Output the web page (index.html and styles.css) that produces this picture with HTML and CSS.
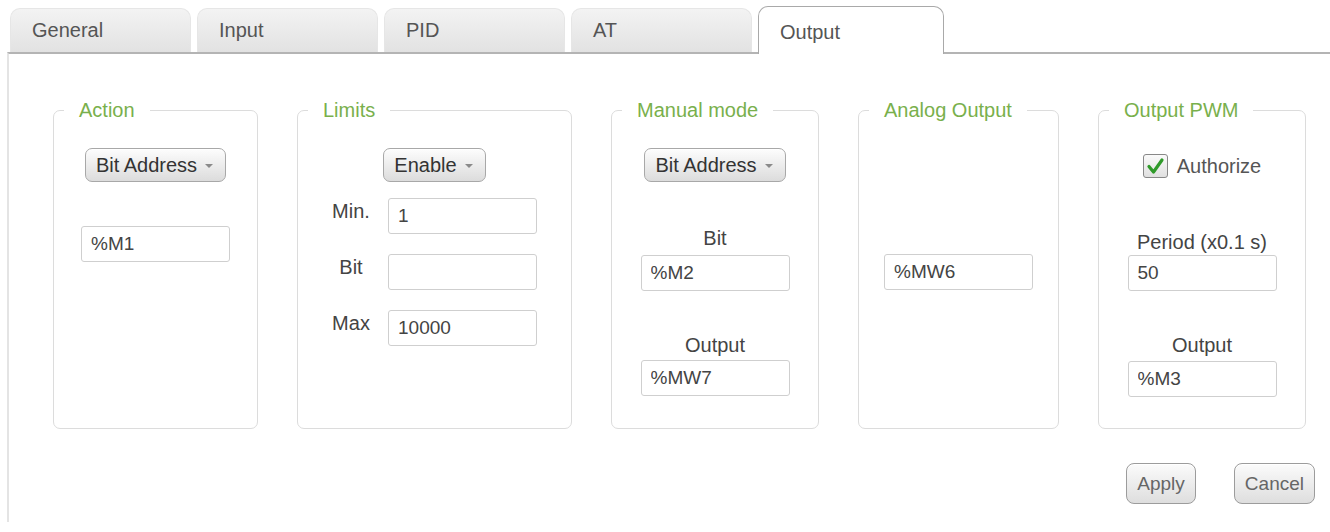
FILE: index.html
```html
<!DOCTYPE html>
<html>
<head>
<meta charset="utf-8">
<link rel="stylesheet" href="styles.css">
</head>
<body>
<div class="tabs">
  <div class="tab">General</div>
  <div class="tab">Input</div>
  <div class="tab">PID</div>
  <div class="tab">AT</div>
  <div class="tab active">Output</div>
</div>
<div class="panel">
  <div class="groups">
    <fieldset class="group w-action">
      <legend>Action</legend>
      <div class="body">
        <div class="select"><span>Bit Address</span><span class="caret"></span></div>
        <input class="field action-field" type="text" value="%M1" readonly>
      </div>
    </fieldset>
    <fieldset class="group w-limits">
      <legend>Limits</legend>
      <div class="body">
        <div class="select"><span>Enable</span><span class="caret"></span></div>
        <div class="limits-grid">
          <span class="row-label">Min.</span><input class="field" type="text" value="1" readonly>
          <span class="row-label">Bit</span><input class="field" type="text" value="" readonly>
          <span class="row-label">Max</span><input class="field" type="text" value="10000" readonly>
        </div>
      </div>
    </fieldset>
    <fieldset class="group w-manual">
      <legend>Manual mode</legend>
      <div class="body">
        <div class="select"><span>Bit Address</span><span class="caret"></span></div>
        <div class="label first-label">Bit</div>
        <input class="field" type="text" value="%M2" readonly>
        <div class="label second-label">Output</div>
        <input class="field" type="text" value="%MW7" readonly>
      </div>
    </fieldset>
    <fieldset class="group w-analog">
      <legend>Analog Output</legend>
      <div class="body analog-body">
        <input class="field" type="text" value="%MW6" readonly>
      </div>
    </fieldset>
    <fieldset class="group w-pwm">
      <legend>Output PWM</legend>
      <div class="body pwm-body">
        <div class="check-row">
          <span class="checkbox">
            <svg width="19" height="19" viewBox="0 0 19 19"><path d="M3 9.5 L7.5 15 L16 3" fill="none" stroke="#2f9a2a" stroke-width="3.2" stroke-linecap="round" stroke-linejoin="round"/></svg>
          </span>
          <span class="check-text">Authorize</span>
        </div>
        <div class="label period-label">Period (x0.1 s)</div>
        <input class="field" type="text" value="50" readonly>
        <div class="label pwm-out-label">Output</div>
        <input class="field" type="text" value="%M3" readonly>
      </div>
    </fieldset>
  </div>
  <div class="actions">
    <button class="btn">Apply</button>
    <button class="btn">Cancel</button>
  </div>
</div>
</body>
</html>
```

FILE: styles.css
```css
* { box-sizing: border-box; }
html, body { margin: 0; padding: 0; background: #fff; }
body {
  font-family: "Liberation Sans", Arial, sans-serif;
  font-size: 20px;
  color: #444;
  width: 1330px;
  height: 532px;
  overflow: hidden;
}
.tabs {
  display: flex;
  align-items: flex-end;
  gap: 6px;
  padding: 6px 0 0 10px;
  height: 54px;
  margin-bottom: -2px;
  position: relative;
  z-index: 1;
}
.tab {
  width: 181px;
  height: 44px;
  margin-bottom: 2px;
  padding: 9px 0 0 21px;
  line-height: 24px;
  color: #555;
  border-radius: 10px 10px 0 0;
  background: linear-gradient(#f3f3f3, #e2e2e2);
  border: 1px solid #e6e6e6;
  border-bottom: none;
}
.tab.active {
  width: 186px;
  height: 48px;
  margin-bottom: 0;
  padding-top: 13px;
  background: #fff;
  border: 1px solid #a9a9a9;
  border-bottom: none;
}
.panel {
  margin-left: 7px;
  height: 470px;
  border-top: 2px solid #b4b4b4;
  border-left: 2px solid #e4e4e4;
  padding: 44px 0 0 44px;
}
.groups {
  display: flex;
  gap: 39px;
}
.group {
  margin: 0;
  padding: 0;
  height: 331px;
  border: 1px solid #dcdcdc;
  border-radius: 7px;
  min-width: 0;
}
.group legend {
  margin-left: 10px;
  padding: 0 15px;
  line-height: 24px;
  color: #79b04c;
}
.w-action { width: 205px; }
.w-limits { width: 275px; }
.w-manual { width: 208px; }
.w-analog { width: 201px; }
.w-pwm { width: 208px; }
.body {
  display: flex;
  flex-direction: column;
  align-items: center;
  padding-top: 26px;
}
.select {
  display: flex;
  align-items: center;
  gap: 8px;
  height: 34px;
  padding: 0 12px 0 10px;
  border: 1px solid #a8a8a8;
  border-radius: 7px;
  background: linear-gradient(#fdfdfd, #dcdcdc);
  box-shadow: inset 0 1px 0 #fff;
  color: #333;
  line-height: 24px;
}
.caret {
  width: 0;
  height: 0;
  border-left: 4px solid transparent;
  border-right: 4px solid transparent;
  border-top: 4px solid #8a8a8a;
  margin-top: 2px;
}
.field {
  width: 149px;
  height: 36px;
  border: 1px solid #cfcfcf;
  border-radius: 3px;
  padding: 0 9px;
  font-family: "Liberation Sans", Arial, sans-serif;
  font-size: 19px;
  color: #444;
  background: #fff;
  outline: none;
  margin: 0;
}
.action-field { margin-top: 44px; }
.limits-grid {
  align-self: flex-start;
  margin: 16px 0 0 28px;
  display: grid;
  grid-template-columns: 50px 149px;
  column-gap: 12px;
  row-gap: 20px;
}
.row-label {
  text-align: center;
  line-height: 24px;
  padding-top: 1px;
}
.label {
  line-height: 24px;
  color: #444;
}
.first-label { margin-top: 44px; margin-bottom: 5px; }
.second-label { margin-top: 42px; margin-bottom: 3px; }
.analog-body { padding-top: 132px; }
.pwm-body { padding-top: 32px; }
.check-row {
  display: flex;
  align-items: center;
  gap: 9px;
  height: 24px;
}
.checkbox {
  width: 25px;
  height: 24px;
  border: 1px solid #888;
  border-radius: 3px;
  background: linear-gradient(#fafafa, #e0e0e0);
  display: flex;
  align-items: center;
  justify-content: center;
}
.check-text { color: #555; line-height: 24px; }
.period-label { margin-top: 52px; margin-bottom: 1px; }
.pwm-out-label { margin-top: 42px; margin-bottom: 4px; }
.actions {
  display: flex;
  justify-content: flex-end;
  gap: 38px;
  margin-top: 34px;
  padding-right: 15px;
}
.btn {
  height: 41px;
  padding: 0 10px;
  border: 1px solid #9c9c9c;
  border-radius: 8px;
  background: linear-gradient(#fbfbfb, #dedede);
  box-shadow: inset 0 1px 0 #fff;
  font-family: "Liberation Sans", Arial, sans-serif;
  font-size: 19px;
  color: #666;
}
```
